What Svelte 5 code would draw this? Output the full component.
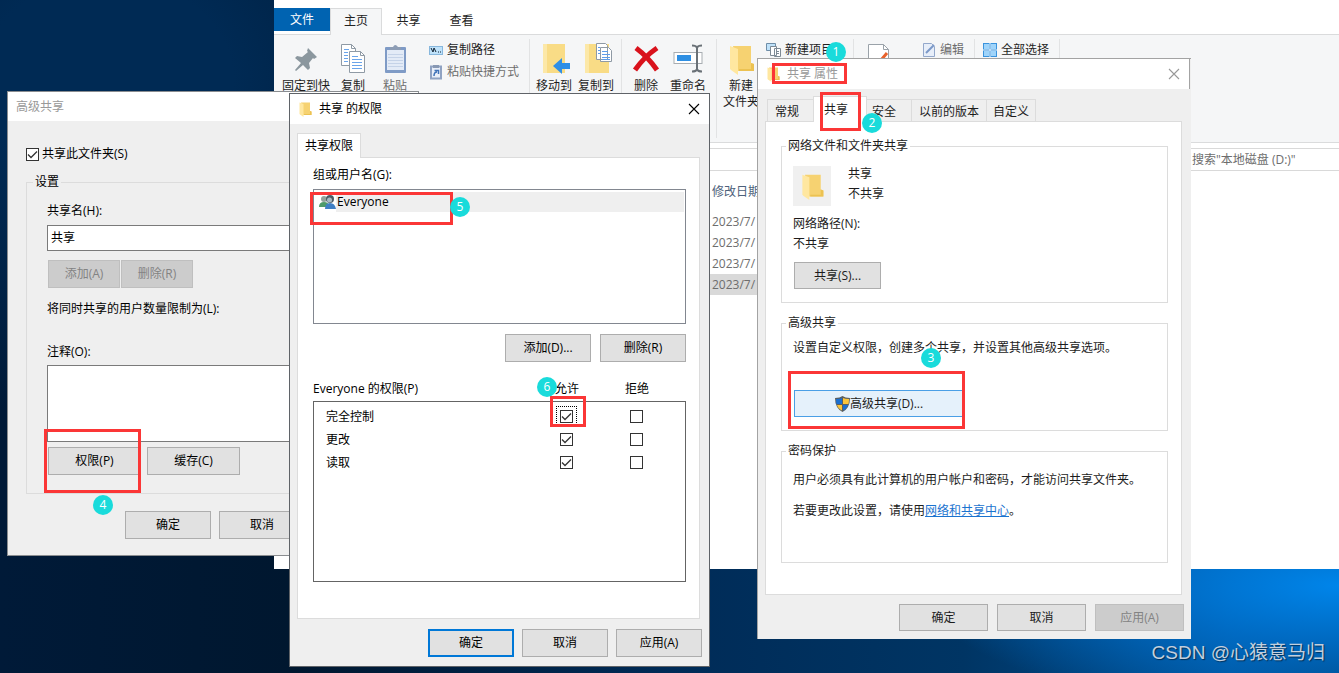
<script>
    const tabs = ["常规", "共享", "安全", "以前的版本", "自定义"];
    let activeTab = $state("共享");

    let shared = $state(true);
    let shareName = $state("共享");
    let comment = $state("");

    let permissions = $state([
        { name: "完全控制", allow: true, deny: false },
        { name: "更改", allow: true, deny: false },
        { name: "读取", allow: true, deny: false },
    ]);

    const files = ["2023/7/", "2023/7/", "2023/7/", "2023/7/"];
    const selectedFile = 3;

    // numbered steps: red frame + badge centre, in desktop coordinates
    const steps = [
        { x: 772, y: 63, w: 75, h: 21, bx: 836, by: 52 },
        { x: 820, y: 92, w: 41, h: 39, bx: 872, by: 123 },
        { x: 788, y: 371, w: 177, h: 58, bx: 931, by: 358 },
        { x: 44, y: 429, w: 97, h: 64, bx: 103, by: 505 },
        { x: 310, y: 192, w: 143, h: 33, bx: 460, by: 207 },
        { x: 550, y: 396, w: 36, h: 31, bx: 547, by: 387 },
    ];
</script>

{#snippet folder(size)}
    <svg width={size} height={size} viewBox="0 0 32 32" aria-hidden="true">
        <path d="M8 3h18v17l3 1v7H12z" fill="#f6d271" />
        <path d="M26 20l3 1v7H14v-2h12z" fill="#ecc252" />
        <path d="M5 3l8 3v26l-7-5-1-1z" fill="#ffe7a0" />
    </svg>
{/snippet}

{#snippet cross()}
    <svg width="12" height="12" viewBox="0 0 12 12" aria-hidden="true">
        <path d="M1 1l10 10M11 1L1 11" fill="none" stroke="currentColor" stroke-width="1.1" />
    </svg>
{/snippet}

<main class="desktop">
    <section class="explorer">
        <nav class="ribbon-tabs">
            <button class="file">文件</button>
            <button class="current">主页</button>
            <button>共享</button>
            <button>查看</button>
        </nav>

        <div class="ribbon">
            <div class="group clipboard">
                <button class="big wide">
                    <svg width="32" height="32" viewBox="0 0 32 32">
                        <path d="M18 5l9 9-3 2-1-1-4 5 1 5-2 2-5-5-7 6-1-1 6-7-6-5 2-2 5 1 6-5-1-1z" fill="#8b979e" />
                    </svg>
                    固定到快
                </button>
                <button class="big">
                    <svg width="32" height="32" viewBox="0 0 32 32">
                        <g fill="#fff" stroke="#8f9aa5">
                            <path d="M4.500 1.500h10l4 4v17h-14z" />
                            <path d="M12.500 8.500h11l4 4v17h-15z" />
                        </g>
                        <path d="M14.500 1.500v4h4M23.500 8.500v4h4" fill="none" stroke="#8f9aa5" />
                        <path d="M7 6.500h5M7 9.500h4M7 12.500h4M7 15.500h4M7 18.500h4M15 13.500h6M15 16.500h10M15 19.500h10M15 22.500h10M15 25.500h10" stroke="#6aa4ea" />
                    </svg>
                    复制
                </button>
                <button class="big dim">
                    <svg width="32" height="32" viewBox="0 0 32 32">
                        <rect x="6" y="4" width="21" height="26" rx="1" fill="#7f9bc6" />
                        <rect x="8" y="7" width="17" height="20" fill="#e3ebf7" />
                        <path d="M9 11.500h15M9 14.500h15M9 17.500h15M9 20.500h15M9 23.500h15" stroke="#c5d3e8" />
                        <path d="M11 7V4h3q2-4 5 0h3v3z" fill="#8d9db5" />
                    </svg>
                    粘贴
                </button>
                <div class="small-col">
                    <button class="small">
                        <svg width="14" height="16" viewBox="0 0 14 16">
                            <rect x=".5" y="4.500" width="13" height="8" fill="#bfe2fa" stroke="#87b7dd" />
                            <path d="M2 6l2 4 1-4 2 4M9 10h1M11 10h1" fill="none" stroke="#123" />
                        </svg>
                        复制路径
                    </button>
                    <button class="small dim">
                        <svg width="14" height="16" viewBox="0 0 14 16">
                            <rect x="2" y="2.500" width="10" height="12" fill="#e8eef8" stroke="#8fa2c2" stroke-width="2" />
                            <path d="M4 1h6v3H4z" fill="#8798b3" />
                            <path d="M5 12c0-3 1-4 3-4M5.500 6.500H9.500V10" fill="none" stroke="#3f72b8" stroke-width="1.500" />
                        </svg>
                        粘贴快捷方式
                    </button>
                </div>
            </div>

            <div class="group">
                <button class="big">
                    <svg width="32" height="32" viewBox="0 0 32 32">
                        <path d="M5 1h22v29H5z" fill="#f9dc86" />
                        <path d="M5 1h4v29H5z" fill="#fce8a8" />
                        <path d="M32 20h-8v-5l-9 8 9 8v-5h8z" fill="#2f8fe6" />
                    </svg>
                    移动到
                </button>
                <button class="big">
                    <svg width="32" height="32" viewBox="0 0 32 32">
                        <path d="M5 1h24v29H5z" fill="#f9dc86" />
                        <path d="M5 1h4v29H5z" fill="#fce8a8" />
                        <path d="M16.500 .5h9l2 2v14h-11zM20.500 4.500h8l3 3v11h-11z" fill="#fff" stroke="#8f9aa5" />
                        <path d="M18 4.500h2M18 7.500h2M18 10.500h2M22 8.500h6M22 11.500h8M22 14.500h8M22 16.500h8" stroke="#5f9dea" />
                    </svg>
                    复制到
                </button>
            </div>

            <div class="group organize">
                <button class="big">
                    <svg width="32" height="32" viewBox="0 0 32 32">
                        <path d="M6 5q12 9 21 22M27 5Q14 14 5 27" fill="none" stroke="#d9121c" stroke-width="5" />
                    </svg>
                    删除
                </button>
                <button class="big">
                    <svg width="32" height="32" viewBox="0 0 32 32">
                        <rect x="2" y="9.500" width="28" height="11" fill="#fff" stroke="#a8adb2" />
                        <rect x="5" y="12" width="14" height="6" fill="#2e8fe3" />
                        <path d="M20 2.500q4 0 5 2 1-2 5-2M25 4v23M20 28.500q4 0 5-2 1 2 5 2" fill="none" stroke="#6a7177" stroke-width="2" />
                    </svg>
                    重命名
                </button>
            </div>

            <div class="group new">
                <button class="big">
                    {@render folder(32)}
                    新建<br />文件夹
                </button>
                <button class="small">
                    <svg width="15" height="16" viewBox="0 0 15 16">
                        <path d="M.5 1.500h9v7h-9z" fill="#bfe2fa" stroke="#6f8ea8" />
                        <path d="M4.500 4.500h6v9h-6zM8.500 6.500h6v8h-6z" fill="#fff" stroke="#7e8a95" />
                        <path d="M10 9.500h3M10 11.500h3" stroke="#7e8a95" />
                    </svg>
                    新建项目
                </button>
            </div>

            <div class="group open">
                <button class="big" aria-label="属性">
                    <svg width="32" height="32" viewBox="0 0 32 32">
                        <path d="M5.500 1.500h15l5 5v24h-20z" fill="#fff" stroke="#9aa2a9" />
                        <path d="M20.500 1.500v5h5" fill="none" stroke="#9aa2a9" />
                        <path d="M9 18l4 5L24 10" fill="none" stroke="#e8622c" stroke-width="3" />
                    </svg>
                </button>
                <button class="small dim">
                    <svg width="14" height="16" viewBox="0 0 14 16">
                        <path d="M1.500 1.500h8l3 3v10h-11z" fill="#e7eef9" stroke="#93a8cb" />
                        <path d="M4 11l8-8" stroke="#7b98c8" stroke-width="2" />
                    </svg>
                    编辑
                </button>
            </div>

            <div class="group select">
                <button class="small">
                    <svg width="14" height="16" viewBox="0 0 14 16">
                        <path d="M0 1h14v14H0z" fill="#3a93dd" />
                        <path d="M1 2h5v5H1zM8 2h5v5H8zM1 9h5v5H1zM8 9h5v5H8z" fill="#9fd4fa" />
                        <path d="M7 1v14M0 8h14" stroke="#e8f4fd" />
                    </svg>
                    全部选择
                </button>
            </div>
        </div>

        <div class="address">
            <input type="search" aria-label="搜索" placeholder={'搜索"本地磁盘 (D:)"'} />
        </div>

        <table class="files">
            <thead>
                <tr><th>修改日期</th></tr>
            </thead>
            <tbody>
                {#each files as date, i}
                    <tr class:selected={i === selectedFile}><td>{date}</td></tr>
                {/each}
            </tbody>
        </table>
    </section>

    <section class="dialog advanced">
        <header class="inactive">高级共享</header>
        <div class="body">
            <label class="check">
                <input type="checkbox" bind:checked={shared} />共享此文件夹(S)
            </label>
            <fieldset>
                <legend>设置</legend>
                <label for="share-name">共享名(H):</label>
                <input id="share-name" type="text" bind:value={shareName} />
                <div class="pair">
                    <button class="btn" disabled>添加(A)</button>
                    <button class="btn" disabled>删除(R)</button>
                </div>
                <p class="limit">将同时共享的用户数量限制为(L):</p>
                <label for="comment">注释(O):</label>
                <textarea id="comment" bind:value={comment}></textarea>
                <div class="actions">
                    <button class="btn">权限(P)</button>
                    <button class="btn">缓存(C)</button>
                </div>
            </fieldset>
            <footer>
                <button class="btn">确定</button>
                <button class="btn">取消</button>
            </footer>
        </div>
    </section>

    <section class="dialog properties">
        <header class="inactive">
            {@render folder(16)}
            <span>共享 属性</span>
            <button class="close" aria-label="关闭">{@render cross()}</button>
        </header>
        <div class="body">
            <nav class="tabs">
                {#each tabs as tab}
                    <button class:active={tab === activeTab} onclick={() => (activeTab = tab)}>{tab}</button>
                {/each}
            </nav>
            <div class="panel">
                <fieldset class="network">
                    <legend>网络文件和文件夹共享</legend>
                    <div class="item">
                        <div class="thumb">{@render folder(28)}</div>
                        <div>
                            <p>共享</p>
                            <p>不共享</p>
                        </div>
                    </div>
                    <p>网络路径(N):</p>
                    <p>不共享</p>
                    <button class="btn">共享(S)...</button>
                </fieldset>
                <fieldset class="custom">
                    <legend>高级共享</legend>
                    <p>设置自定义权限，创建多个共享，并设置其他高级共享选项。</p>
                    <button class="btn hot">
                        <svg width="15" height="16" viewBox="0 0 15 16" aria-hidden="true">
                            <path d="M7.500 0Q10 2 15 2q0 10-7.500 14Q0 12 0 2q5 0 7.500-2z" fill="#5b5f60" />
                            <path d="M7 2v6H1.500Q1 6 1 3q4 0 6-1z" fill="#1b6fd0" />
                            <path d="M8 2v6h5.500Q14 6 14 3q-4 0-6-1zM7 9v5.500Q3 12.500 2 9z" fill="#fbc43a" />
                            <path d="M8 9v5.500q4-2 5-5.500z" fill="#1b6fd0" />
                        </svg>
                        高级共享(D)...
                    </button>
                </fieldset>
                <fieldset class="password">
                    <legend>密码保护</legend>
                    <p>用户必须具有此计算机的用户帐户和密码，才能访问共享文件夹。</p>
                    <p>若要更改此设置，请使用<a href="#network">网络和共享中心</a>。</p>
                </fieldset>
            </div>
            <footer>
                <button class="btn">确定</button>
                <button class="btn">取消</button>
                <button class="btn" disabled>应用(A)</button>
            </footer>
        </div>
    </section>

    <section class="dialog permissions">
        <header>
            {@render folder(16)}
            <span>共享 的权限</span>
            <button class="close" aria-label="关闭">{@render cross()}</button>
        </header>
        <div class="body">
            <nav class="tabs">
                <button class="active">共享权限</button>
            </nav>
            <div class="panel">
                <p id="users">组或用户名(G):</p>
                <ul aria-labelledby="users">
                    <li>
                        <svg width="17" height="16" viewBox="0 0 17 16" aria-hidden="true">
                            <circle cx="5" cy="5" r="3" fill="#93a39c" />
                            <path d="M0 13q0-5 5-5t5 5z" fill="#4f9b6a" />
                            <circle cx="11" cy="5" r="4" fill="#4b5c66" />
                            <circle cx="10.500" cy="6" r="2.500" fill="#a9bac2" />
                            <path d="M6 15q0-6 5-6t6 6z" fill="#3f7fc4" />
                        </svg>
                        <span>Everyone</span>
                    </li>
                </ul>
                <div class="pair">
                    <button class="btn">添加(D)...</button>
                    <button class="btn">删除(R)</button>
                </div>
                <table>
                    <thead>
                        <tr>
                            <th>Everyone 的权限(P)</th>
                            <th>允许</th>
                            <th>拒绝</th>
                        </tr>
                    </thead>
                    <tbody>
                        {#each permissions as p, i}
                            <tr>
                                <td>{p.name}</td>
                                <td class:focused={i === 0}>
                                    <input type="checkbox" aria-label="{p.name} 允许" bind:checked={p.allow} />
                                </td>
                                <td>
                                    <input type="checkbox" aria-label="{p.name} 拒绝" bind:checked={p.deny} />
                                </td>
                            </tr>
                        {/each}
                    </tbody>
                </table>
            </div>
            <footer>
                <button class="btn default">确定</button>
                <button class="btn">取消</button>
                <button class="btn">应用(A)</button>
            </footer>
        </div>
    </section>

    {#each steps as s, i}
        <div class="frame" style="left: {s.x}px; top: {s.y}px; width: {s.w}px; height: {s.h}px"></div>
        <div class="badge" style="left: {s.bx}px; top: {s.by}px">{i + 1}</div>
    {/each}

    <div class="watermark">CSDN @心猿意马归</div>
</main>

<style>
    :global(body) {
        margin: 0;
    }

    .desktop,
    .desktop * {
        box-sizing: border-box;
    }

    .desktop {
        position: relative;
        min-height: 100vh;
        overflow: hidden;
        background:
            radial-gradient(ellipse 420px 130px at 100% 87%, #0085ea 0%, rgba(0, 112, 205, 0.8) 45%, transparent 100%),
            radial-gradient(ellipse 420px 340px at 8% 12%, #002a54 30%, transparent),
            linear-gradient(90deg, #001a38 0%, #00172f 22%, #002b57 50%, #003564 72%, #005298 92%, #00457f 100%);
        color: #000;
        font: 12px/16px "Open Sans", "Noto Sans CJK SC", sans-serif;
    }

    button,
    input,
    textarea {
        font: inherit;
        color: inherit;
        margin: 0;
    }

    button {
        padding: 0;
        border: 0;
        background: none;
        white-space: nowrap;
    }

    p {
        margin: 0;
    }

    svg {
        display: block;
        flex: none;
    }

    .explorer {
        position: absolute;
        left: 274px;
        right: 0;
        top: 0;
        height: 569px;
        background: #fff;
    }

    .ribbon-tabs {
        display: flex;
        height: 35px;
        padding-top: 8px;
        border-bottom: 1px solid #dadbdc;
        color: #222;
    }

    .ribbon-tabs button {
        width: 53px;
        height: 25px;
    }

    .ribbon-tabs .file {
        width: 56px;
        height: 23px;
        background: #0063b1;
        color: #fff;
    }

    .ribbon-tabs .current {
        width: 52px;
        height: 27px;
        padding-bottom: 2px;
        border: 1px solid #dadbdc;
        border-bottom: 0;
        background: #f5f6f7;
    }

    .ribbon {
        display: flex;
        height: 108px;
        padding: 4px 0;
        border-bottom: 1px solid #dadbdc;
        background: #f5f6f7;
        color: #1e1e1e;
    }

    .group {
        display: flex;
        align-items: flex-start;
        padding: 0 4px 0 3px;
        border-right: 1px solid #e2e3e4;
    }

    .clipboard {
        padding: 0 10px 0 6px;
    }

    .organize {
        padding-right: 7px;
    }

    .new {
        width: 137px;
        gap: 4px;
    }

    .open {
        width: 121px;
        padding: 0 10px 0 4px;
        justify-content: space-between;
    }

    .select {
        padding: 0 10px 0 8px;
    }

    .big {
        display: block;
        width: 42px;
        padding-top: 4px;
        text-align: center;
    }

    .big svg {
        margin: 0 auto 3px;
    }

    .wide {
        width: 52px;
    }

    .small-col {
        margin-left: 13px;
    }

    .small {
        display: flex;
        align-items: center;
        gap: 4px;
        height: 22px;
    }

    .dim {
        color: #6d6d6d;
    }

    .address {
        display: flex;
        justify-content: flex-end;
        height: 23px;
        margin-top: 5px;
        border: 1px solid #d9d9d9;
        border-width: 1px 0;
    }

    .address input {
        width: 148px;
        padding: 0 1px;
        border: 0;
        background: none;
        appearance: none;
    }

    .address input::placeholder {
        color: #6d6d6d;
    }

    .files {
        width: 60%;
        margin-top: 8px;
        border-collapse: collapse;
        color: #6d6d6d;
        text-align: left;
    }

    .files th,
    .files td {
        height: 21px;
        padding: 0 0 0 438px;
    }

    .files th {
        height: 32px;
        padding-bottom: 6px;
        color: #4c607a;
        font-weight: normal;
    }

    .files .selected {
        background: #d9d9d9;
    }

    .dialog {
        position: absolute;
        isolation: isolate;
        border: 1px solid #5f6368;
        background: #efefef;
    }

    .dialog header {
        display: flex;
        align-items: center;
        height: 30px;
        padding-left: 7px;
        background: #fff;
    }

    .dialog header span {
        flex: 1;
        margin-left: 6px;
    }

    .dialog .inactive {
        color: #999;
    }

    .close {
        width: 30px;
        height: 30px;
        display: grid;
        place-items: center;
    }

    .dialog footer {
        display: flex;
        justify-content: flex-end;
        gap: 8px;
    }

    .btn {
        width: 86px;
        height: 28px;
        border: 1px solid #adadad;
        background: #e1e1e1;
    }

    .btn:disabled {
        border-color: #bfbfbf;
        background: #ccc;
        color: #838383;
    }

    .default {
        border: 2px solid #0078d7;
    }

    .dialog fieldset {
        min-width: 0;
        margin: 0;
        border: 1px solid #dcdcdc;
    }

    .dialog legend {
        padding: 0 2px;
    }

    .dialog input[type="checkbox"] {
        display: block;
        width: 13px;
        height: 13px;
        border: 1px solid #333;
        background: #fff;
        appearance: none;
    }

    .dialog input[type="checkbox"]:checked {
        background: #fff url("data:image/svg+xml,%3Csvg xmlns='http://www.w3.org/2000/svg' viewBox='0 0 11 11'%3E%3Cpath d='M1 5.500l3 3 6-6' fill='none' stroke='%23333' stroke-width='1.300'/%3E%3C/svg%3E");
    }

    .tabs {
        display: flex;
        align-items: flex-end;
    }

    .tabs button {
        border: 1px solid #dcdcdc;
        border-bottom: 0;
    }

    .tabs .active {
        z-index: 1;
        margin-bottom: -1px;
        background: #fff;
    }

    .panel {
        border: 1px solid #dcdcdc;
        background: #fff;
    }

    .advanced {
        left: 7px;
        top: 91px;
        width: 412px;
        border-color: #8a8d90;
    }

    .advanced header {
        height: 29px;
        padding-left: 8px;
    }

    .advanced .body {
        padding: 25px 18px 16px;
    }

    .check {
        display: flex;
        align-items: center;
        gap: 3px;
    }

    .advanced fieldset {
        margin-top: 12px;
        padding: 13px 20px 18px;
    }

    .advanced legend {
        margin-left: -14px;
    }

    .advanced fieldset label {
        display: block;
    }

    .advanced input[type="text"],
    .advanced textarea {
        display: block;
        width: 100%;
        border: 1px solid #7a7a7a;
        border-radius: 0;
        background: #fff;
        resize: none;
    }

    .advanced input[type="text"] {
        height: 26px;
        margin-top: 6px;
        padding: 0 3px 3px;
    }

    .advanced textarea {
        height: 77px;
        margin-top: 5px;
    }

    .advanced .pair {
        display: flex;
        gap: 1px;
        margin: 9px 0 13px 1px;
    }

    .advanced .pair .btn {
        width: 72px;
    }

    .limit {
        margin-bottom: 27px;
    }

    .advanced .actions {
        display: flex;
        gap: 6px;
        margin: 5px 0 0 1px;
    }

    .advanced .actions .btn {
        width: 93px;
    }

    .advanced footer {
        justify-content: flex-start;
        margin-top: 17px;
        padding-left: 99px;
    }

    .properties {
        left: 757px;
        top: 58px;
        width: 434px;
        border-color: #a3a3a3;
        border-width: 1px 0 0 1px;
        color: #1c1c1c;
    }

    .properties header {
        margin-right: 1px;
        border-right: 1px solid #a3a3a3;
    }

    .properties .body {
        padding: 8px 7px;
    }

    .properties .tabs {
        height: 24px;
        padding-left: 2px;
    }

    .properties .tabs button {
        flex: none;
        width: 47px;
        height: 22px;
        margin-right: -1px;
        padding: 2px 7px 0 0;
    }

    .properties .tabs .active {
        width: 54px;
        height: 26px;
        padding: 0 8px 0 0;
    }

    .properties .tabs button:nth-child(3) {
        width: 46px;
        padding-right: 10px;
    }

    .properties .tabs button:nth-child(4) {
        width: 76px;
        padding-right: 0;
    }

    .properties .tabs button:nth-child(5) {
        width: 50px;
        padding-right: 0;
    }

    .properties .panel {
        margin-right: 2px;
        padding: 16px 13px 31px 15px;
    }

    .properties fieldset {
        padding: 10px 11px 13px;
    }

    .properties fieldset p {
        line-height: 20px;
    }

    .properties legend {
        margin-left: -7px;
    }

    .properties .btn {
        width: 89px;
        height: 27px;
    }

    .item {
        display: flex;
        gap: 17px;
        margin-bottom: 8px;
    }

    .thumb {
        display: grid;
        place-items: center;
        width: 38px;
        height: 40px;
        margin-top: 2px;
        background: #f0f0f0;
    }

    .network .btn {
        display: block;
        width: 87px;
        margin: 8px 0 0 1px;
    }

    .properties .custom {
        margin: 12px 0;
        padding-top: 7px;
    }

    .custom .btn {
        display: flex;
        align-items: center;
        justify-content: center;
        width: 170px;
        margin: 32px 0 0 1px;
    }

    .custom .hot {
        border-color: #4a9fe6;
        background: #e5f1fb;
    }

    .properties .password {
        padding: 11px 11px 41px;
    }

    .password p + p {
        margin-top: 11px;
    }

    a {
        color: #1a73cf;
    }

    .properties footer {
        gap: 9px;
        margin-top: 9px;
    }

    .permissions {
        left: 289px;
        top: 93px;
        width: 421px;
    }

    .permissions .body {
        padding: 9px 7px;
    }

    .permissions .tabs button {
        width: 64px;
        height: 25px;
    }

    .permissions .panel {
        margin-right: 2px;
        padding: 9px 13px 36px 15px;
    }

    ul {
        height: 135px;
        margin: 6px 0 10px;
        padding: 2px 1px;
        border: 1px solid #828790;
        list-style: none;
    }

    li {
        display: flex;
        align-items: center;
        padding-left: 4px;
    }

    li span {
        flex: 1;
        padding: 2px 1px;
        background: #efefef;
    }

    .permissions .pair {
        display: flex;
        justify-content: flex-end;
        gap: 9px;
        margin-bottom: 19px;
    }

    .permissions table,
    .permissions thead,
    .permissions tbody {
        display: block;
    }

    .permissions tr {
        display: grid;
        grid-template-columns: 1fr 70px 84px;
        align-items: center;
    }

    .permissions th,
    .permissions td {
        padding: 0;
        font-weight: normal;
    }

    .permissions th:first-child {
        text-align: left;
    }

    .permissions th:last-child,
    .permissions td:last-child {
        padding-right: 14px;
    }

    .permissions tbody {
        height: 181px;
        margin-top: 4px;
        padding: 3px 0 0 12px;
        border: 1px solid #646464;
    }

    .permissions tbody tr {
        height: 23px;
    }

    .permissions td input {
        margin: 0 auto;
    }

    .focused input {
        outline: 1px dotted #000;
        outline-offset: 3px;
    }

    .permissions footer {
        margin-top: 10px;
    }

    .frame {
        position: absolute;
        border: 3px solid #fb3636;
        pointer-events: none;
    }

    .badge {
        position: absolute;
        width: 20px;
        height: 20px;
        margin: -10px 0 0 -10px;
        border-radius: 50%;
        background: #19dbdb;
        color: #fff;
        line-height: 20px;
        text-align: center;
    }

    .watermark {
        position: absolute;
        right: 14px;
        bottom: 6px;
        color: #c3d0de;
        font: 20px/28px "Liberation Sans", "Noto Sans CJK SC", sans-serif;
        font-size: 19px;
        text-shadow: 1px 1px 1px rgba(0, 0, 0, 0.5);
    }
</style>
